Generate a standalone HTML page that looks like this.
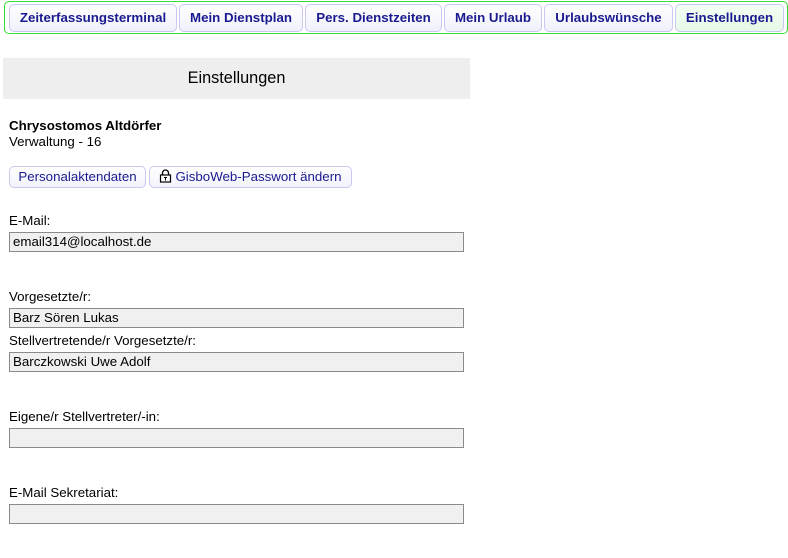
<!DOCTYPE html>
<html><head><meta charset="utf-8"><style>
*{box-sizing:border-box;margin:0;padding:0}
body{width:788px;height:558px;background:#fff;font-family:"Liberation Sans",Arial,sans-serif;font-size:13.3px;color:#000;position:relative;overflow:hidden}
.a{position:absolute}
.nav{left:4px;top:1px;width:784px;height:33px;border:1px solid #33dd33;border-radius:5px}
.tb{position:absolute;top:4px;height:28px;border:1px solid #c8c8f0;border-radius:5px;background:linear-gradient(#fff,#f0f0fb);font-weight:bold;color:#1a1a90;font-size:13.3px;text-align:center;line-height:26px;white-space:nowrap}
.hd{left:3px;top:58px;width:467px;height:41px;background:#eeeeee;text-align:center;line-height:41px;font-size:16.3px}
.bt{position:absolute;top:166px;height:22px;border:1px solid #c8c8f0;border-radius:5px;background:linear-gradient(#fff,#f2f2fc);color:#1a1a90;line-height:20px;text-align:center;white-space:nowrap}
.in{position:absolute;left:9px;width:455px;height:20px;border:1px solid #8a8a8a;background:#f0f0f0;padding-left:3px;line-height:18px}
.lb{position:absolute;left:9px}
</style></head><body>
<div class="a nav"></div>
<div class="tb" style="left:9px;width:168px">Zeiterfassungsterminal</div>
<div class="tb" style="left:179px;width:124px">Mein Dienstplan</div>
<div class="tb" style="left:305px;width:137px">Pers. Dienstzeiten</div>
<div class="tb" style="left:444px;width:98px">Mein Urlaub</div>
<div class="tb" style="left:544px;width:129px">Urlaubswünsche</div>
<div class="tb" style="left:675px;width:109px;background:linear-gradient(#f4fff4,#e6f8e6)">Einstellungen</div>
<div class="a hd">Einstellungen</div>
<div class="lb" style="top:118px;font-weight:bold">Chrysostomos Altdörfer</div>
<div class="lb" style="top:134px">Verwaltung - 16</div>
<div class="bt" style="left:9px;width:137px">Personalaktendaten</div>
<div class="bt" style="left:149px;width:203px"><svg width="13" height="14" viewBox="0 0 13 14" style="vertical-align:-2px;margin-right:3px"><path d="M3.5 6V4a3 3 0 0 1 6 0v2" fill="none" stroke="#000" stroke-width="1.3"/><rect x="1.5" y="6" width="10" height="7" fill="#fff" stroke="#000" stroke-width="1.2"/><path d="M5 8.5h3M6.5 8.5v3" stroke="#000" stroke-width="1"/></svg>GisboWeb-Passwort ändern</div>
<div class="lb" style="top:213px">E-Mail:</div>
<div class="in" style="top:232px">email314@localhost.de</div>
<div class="lb" style="top:289px">Vorgesetzte/r:</div>
<div class="in" style="top:308px">Barz Sören Lukas</div>
<div class="lb" style="top:333px">Stellvertretende/r Vorgesetzte/r:</div>
<div class="in" style="top:352px">Barczkowski Uwe Adolf</div>
<div class="lb" style="top:409px">Eigene/r Stellvertreter/-in:</div>
<div class="in" style="top:428px"></div>
<div class="lb" style="top:485px">E-Mail Sekretariat:</div>
<div class="in" style="top:504px"></div>
</body></html>
